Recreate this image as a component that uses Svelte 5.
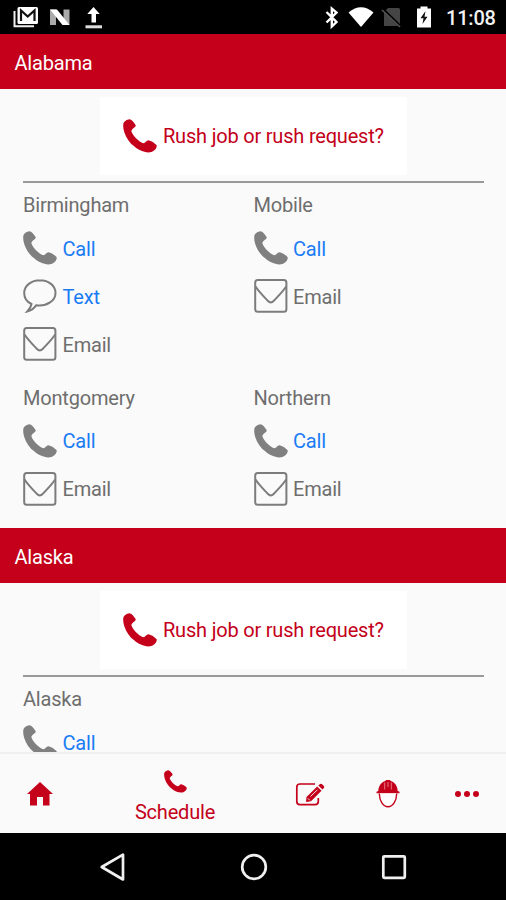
<script>
    const regions = [
        {
            name: "Alabama",
            offices: [
                { name: "Birmingham", actions: ["Call", "Text", "Email"] },
                { name: "Mobile", actions: ["Call", "Email"] },
                { name: "Montgomery", actions: ["Call", "Email"] },
                { name: "Northern", actions: ["Call", "Email"] }
            ]
        },
        {
            name: "Alaska",
            offices: [{ name: "Alaska", actions: ["Call"] }]
        }
    ];
</script>

{#snippet phone()}
    <svg class="phone" viewBox="0 0 34 34">
        <path d="M.4 4.500C1 2.300 4 .4 6.300.2 8.600.2 11.200 3.600 12.700 6.300 13.200 8.300 8.600 9.600 8.400 12.200 9.800 16.500 15.300 22.400 20.300 24.200 22.500 24.200 23.100 21.200 25.500 21.200 28 21.600 31.800 24 33.700 26.300 34 29.300 31.300 32 28.500 33 23 34.600 15.600 31.400 11.500 27.600 6.500 24 3 18.500 1.300 13.200.3 10.200-.1 7.200.4 4.500Z" />
    </svg>
{/snippet}

{#snippet icon(kind)}
    {#if kind === "Call"}
        {@render phone()}
    {:else if kind === "Text"}
        <svg class="line" viewBox="0 0 34 34">
            <path d="M17 1.300C8.300 1.300 1.200 6.700 1.200 13.900c0 5 2.700 8.900 7.300 11.100C8 28 6.600 30 4.300 32.500c4.200-.9 6.600-2.900 9-6.300 11 1.500 19.200-4.800 19.200-12.300C32.500 6.700 25.600 1.300 17 1.300Z" />
        </svg>
    {:else}
        <svg class="line" viewBox="0 0 34 34">
            <rect x="1.200" y="1" width="31.200" height="31.800" rx="2.500" />
            <path d="M1.500 7.500C5.500 13.500 10.500 18.200 14 22Q16.800 24.900 19.600 22C23.100 18.200 28.200 13.500 32.200 7.500" />
        </svg>
    {/if}
{/snippet}

<div class="phone-screen">
    <div class="status">
        <svg class="notice" viewBox="0 0 104 34">
            <path d="M14.500 11V26.300H34" fill="none" stroke="#eee" stroke-width="2" />
            <rect x="17.500" y="7" width="20.500" height="17" rx="1.500" fill="#fff" />
            <path d="M21 21V10.500L27.700 16.500 34.500 10.500V21" fill="none" stroke="#111" stroke-width="2.200" />
            <path d="M50 9.500h6v15.500h-6zM63.500 9.500h6v15.500h-6z" fill="#aaa" />
            <path d="M50 9.500h7L69.500 25h-7Z" fill="#fff" />
            <path d="M93.500 7 87.300 14H91.500V22.500H96V14H99.700Z" fill="#fff" />
            <path d="M85.500 25.300h16.500v3H85.500Z" fill="#ddd" />
        </svg>
        <svg class="system" viewBox="320 0 120 34">
            <path d="m326.500 12 10 10-4.700 4.500V8.500l4.700 4-10 10" fill="none" stroke="#fff" stroke-width="2.400" />
            <path d="M348.500 12.500Q361 2 373.500 12.500L361 27Z" fill="#fff" />
            <path d="M388 8h10.500q1.500 0 1.500 1.500V26h-16V12Z" fill="#454545" />
            <path d="m382.500 9 19 18.500" stroke="#000" stroke-width="3" />
            <path d="m382 10 18 17" stroke="#555" stroke-width="1.600" />
            <path d="M417 8.500h3.500v-2h7v2h3.500v19h-14Z" fill="#fff" />
            <path d="m425.500 11-5 7.300h3L422.500 24l5-7.200h-3Z" fill="#111" />
        </svg>
        <span class="time">11:08</span>
    </div>

    <main>
        {#each regions as region (region.name)}
            <section>
                <h2>{region.name}</h2>
                <button class="rush">
                    {@render phone()}
                    <span>Rush job or rush request?</span>
                </button>
                <div class="offices">
                    {#each region.offices as office (office.name)}
                        <div class="office">
                            <h3>{office.name}</h3>
                            {#each office.actions as action (action)}
                                <div class="action" class:link={action !== "Email"}>
                                    {@render icon(action)}
                                    <span>{action}</span>
                                </div>
                            {/each}
                        </div>
                    {/each}
                </div>
            </section>
        {/each}
    </main>

    <nav class="tabs">
        <div class="tab home">
            <svg width="28" height="26" viewBox="0 0 28 26">
                <path d="M14 1 27 13H23.500V24.500H17V16H11V24.500H4V13H1Z" fill="#c4001a" />
            </svg>
        </div>
        <div class="tab schedule">
            {@render phone()}
            <span>Schedule</span>
        </div>
        <div class="tab edit">
            <svg width="30" height="26" viewBox="0 0 30 26" fill="none" stroke="#c4001a">
                <path d="M20 3H5Q1.800 3 1.800 6V20.500Q1.800 23.700 5 23.700H20Q23.300 23.700 23.300 20.500V17" stroke-width="1.700" />
                <path d="m11.500 16 10.700-10.500 4.300 4.300L16 20.200l-5 .8Z" fill="#c4001a" stroke="none" />
                <path d="m23.300 4.500 1.800-1.500q1-.7 2 .2l1.800 1.900q.8.900 0 1.800l-1.400 1.700Z" fill="#c4001a" stroke="none" />
                <path d="m15.500 15.500 7-6.800M12.800 17.300l2 2" stroke="#fafafa" stroke-width=".9" />
            </svg>
        </div>
        <div class="tab helmet">
            <svg width="24" height="30" viewBox="0 0 24 30">
                <path d="M2.300 12C2.600 6.600 5.500 3 9.300 2L10 .9h4l.7 1.100c3.800 1 6.700 4.600 7 10l1.800.7v1.600H.5v-1.600Z" fill="#c4001a" />
                <path d="M8.700 3.500v7M15.300 3.500v7M12 3v5" stroke="#e99" stroke-width=".8" />
                <path d="M3.300 14.500C3.500 22 7 27.800 12 27.800S20.500 22 20.700 14.500" fill="#fff" stroke="#c4001a" stroke-width="1.400" />
            </svg>
        </div>
        <div class="tab more">
            <svg width="26" height="8" viewBox="0 0 26 8" fill="#c4001a">
                <circle cx="4" cy="4" r="3" />
                <circle cx="13" cy="4" r="3" />
                <circle cx="22" cy="4" r="3" />
            </svg>
        </div>
    </nav>

    <div class="system-nav">
        <svg viewBox="0 0 30 30"><path d="M25 2.700V27.500L3.700 15Z" /></svg>
        <svg viewBox="0 0 30 30"><circle cx="15" cy="15" r="11.800" /></svg>
        <svg viewBox="0 0 30 30"><rect x="4.300" y="4.300" width="21.500" height="21.500" rx="1" /></svg>
    </div>
</div>

<style>
    :global(body) {
        margin: 0;
        background: #000;
    }

    .phone-screen {
        display: flex;
        flex-direction: column;
        width: 506px;
        height: 900px;
        overflow: hidden;
        background: #fafafa;
        color: #6e6e6e;
        font-family: Roboto, sans-serif;
        font-size: 20px;
        line-height: 24px;
        letter-spacing: -0.2px;
    }

    svg {
        display: block;
        flex: none;
    }

    .status {
        display: flex;
        flex: none;
        align-items: center;
        height: 34px;
        background: #000;
        color: #f2f2f2;
    }

    .notice {
        width: 104px;
        height: 34px;
    }

    .system {
        width: 120px;
        height: 34px;
        margin-left: 216px;
    }

    .time {
        margin: 2px 0 0 6px;
        font-weight: 500;
        letter-spacing: -0.2px;
    }

    main {
        flex: 1;
        min-height: 0;
        overflow: hidden;
    }

    h2,
    h3 {
        margin: 0;
        font-size: inherit;
        font-weight: 400;
    }

    h2 {
        height: 54.500px;
        padding-left: 14.500px;
        background: #c4001a;
        color: #fff;
        line-height: 58px;
    }

    .rush {
        display: flex;
        align-items: center;
        gap: 6px;
        width: 307px;
        height: 78px;
        margin: 8.500px 0 6px 100px;
        padding: 0 0 0 23px;
        border: 0;
        background: #fff;
        color: #c4001a;
        font: inherit;
        letter-spacing: inherit;
        white-space: nowrap;
    }

    .phone,
    .line {
        width: 34px;
        height: 34px;
        fill: #808080;
    }

    .line {
        fill: none;
        stroke: #7c7c7c;
        stroke-width: 2;
    }

    .rush .phone,
    .tab .phone {
        fill: #c4001a;
    }

    .offices {
        display: grid;
        grid-template-columns: 230.5px 230.5px;
        width: 461px;
        margin-left: 23px;
        padding-bottom: 8px;
        border-top: 2px solid #999;
    }

    .office {
        padding: 10px 0 7.500px;
    }

    .office h3 {
        height: 31px;
    }

    .action {
        display: flex;
        align-items: center;
        gap: 5.500px;
        height: 48px;
    }

    .action span {
        padding-top: 1px;
    }

    .link {
        color: #1a7cf5;
    }

    .tabs {
        display: flex;
        flex: none;
        align-items: center;
        box-sizing: border-box;
        height: 81px;
        border-top: 2px solid #efefef;
        color: #c4001a;
    }

    .home {
        margin-left: 26px;
    }

    .schedule {
        display: flex;
        flex-direction: column;
        align-items: center;
        width: 82px;
        margin-left: 80px;
        padding-top: 6px;
        gap: 7px;
    }

    .schedule .phone {
        width: 23px;
        height: 23px;
    }

    .edit {
        margin-left: 79px;
    }

    .helmet {
        margin-left: 51px;
    }

    .more {
        margin-left: 54px;
    }

    .system-nav {
        display: flex;
        flex: none;
        align-items: center;
        justify-content: center;
        gap: 110.5px;
        height: 67px;
        padding-left: 1px;
        background: #000;
    }

    .system-nav svg {
        width: 30px;
        height: 30px;
        fill: none;
        stroke: #f0f0f0;
        stroke-width: 2.700;
        stroke-linejoin: round;
    }
</style>
